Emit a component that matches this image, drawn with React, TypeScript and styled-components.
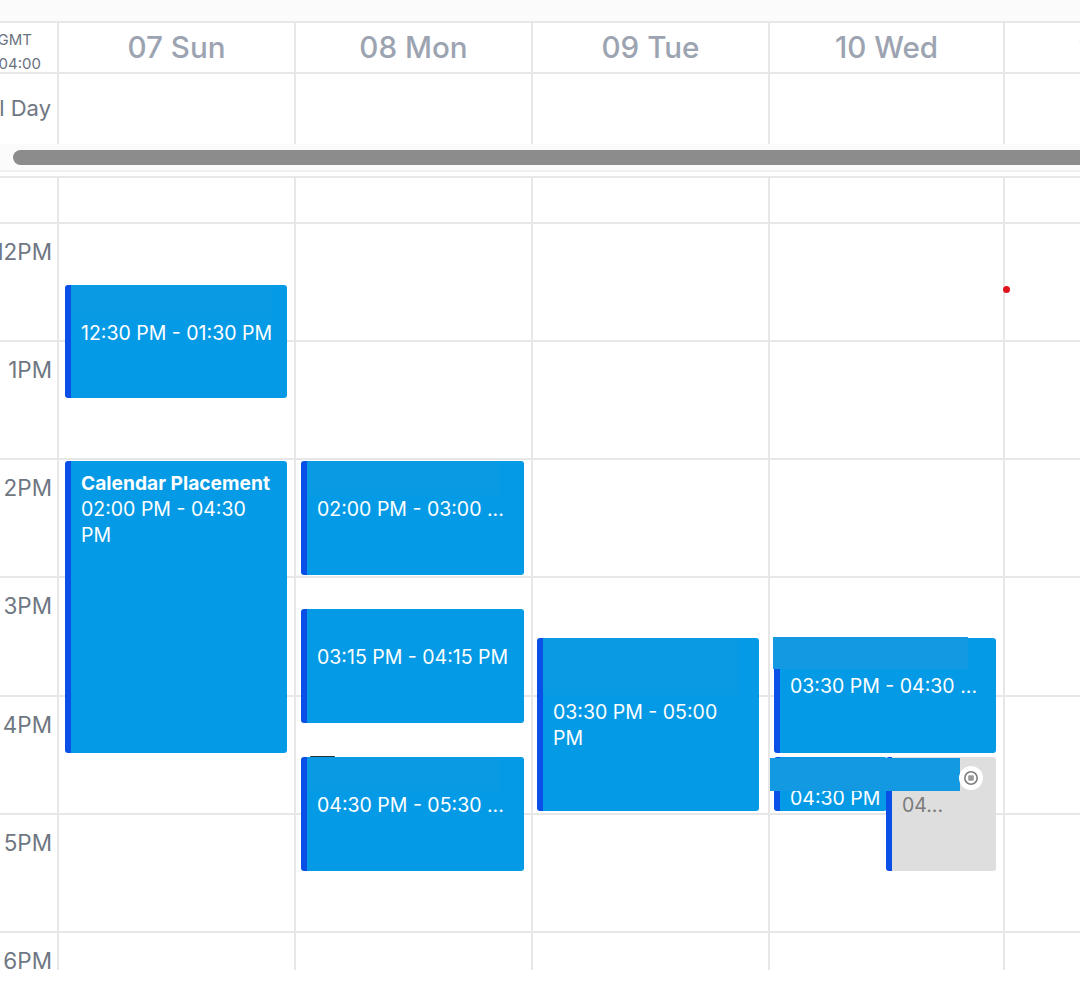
import React from 'react';
import styled, { createGlobalStyle } from 'styled-components';

const LINE = '#e7e7e7';
const EVENT_BLUE = '#049ae5';
const PATCH_BLUE = '#1398e2';
const PATCH_SOFT = '#0a9ae4';
const ACCENT = '#0a4fe8';
const HOUR = 118.17;

const GlobalStyle = createGlobalStyle`
  html, body {
    margin: 0;
    padding: 0;
    background: #fff;
    overflow: hidden;
  }
  body {
    font-family: Inter, "Liberation Sans", sans-serif;
  }
`;

const Page = styled.div`
  width: 1080px;
  height: 987px;
  overflow: hidden;
  background: #fff;
`;

const TopStrip = styled.div`
  height: 21px;
  background: #fbfbfb;
`;

const Columns = styled.div`
  display: grid;
  grid-template-columns: 59px 237px 237px 237px 235px 237px;
  width: 1242px;
`;

const HeaderRow = styled(Columns)`
  border-top: 2px solid ${LINE};
`;

const GutterCell = styled.div<{ $height: number; $bare?: boolean }>`
  height: ${(p) => p.$height}px;
  box-sizing: border-box;
  border-right: 2px solid ${LINE};
  border-bottom: ${(p) => (p.$bare ? 'none' : `2px solid ${LINE}`)};
  display: flex;
  align-items: center;
  justify-content: flex-end;
  overflow: hidden;
`;

const ZoneLabel = styled.div`
  flex: none;
  align-self: flex-start;
  margin-top: 5px;
  padding-right: 16px;
  font-size: 15px;
  line-height: 24px;
  color: #6b7280;
  text-align: center;
  white-space: nowrap;
`;

const AllDayLabel = styled.div`
  flex: none;
  padding-right: 6px;
  font-size: 22px;
  color: #6f7782;
  white-space: nowrap;
  margin-bottom: 2px;
`;

const DayHead = styled.div`
  height: 51px;
  box-sizing: border-box;
  padding-bottom: 2px;
  border-right: 2px solid ${LINE};
  border-bottom: 2px solid ${LINE};
  display: flex;
  align-items: center;
  justify-content: center;
  font-size: 29.6px;
  font-weight: 500;
  color: #9ca3b1;
  white-space: nowrap;
`;

const AllDayCell = styled.div`
  height: 70px;
  box-sizing: border-box;
  border-right: 2px solid ${LINE};
`;

const ScrollTrack = styled.div`
  height: 28px;
  box-sizing: border-box;
  padding: 6px 0 0 13px;
  background: #fbfbfb;
  border-bottom: 2px solid #f0f0f0;
`;

const ScrollThumb = styled.div`
  height: 15px;
  width: 1200px;
  border-radius: 8px;
  background: #8c8c8c;
`;

const Spacer = styled.div`
  height: 4px;
  background: #fff;
  border-bottom: 2px solid ${LINE};
`;

const Body = styled(Columns)`
  height: 792px;
  overflow: hidden;
`;

const Gutter = styled.div`
  border-right: 2px solid ${LINE};
  overflow: hidden;
`;

const FirstSlot = styled.div`
  height: 46px;
  box-sizing: border-box;
  border-bottom: 2px solid ${LINE};
`;

const HourSlot = styled.div`
  height: ${HOUR}px;
  box-sizing: border-box;
  border-bottom: 2px solid ${LINE};
`;

const HourLabel = styled(HourSlot)`
  display: flex;
  justify-content: flex-end;
  align-items: flex-start;
  padding: 14px 5px 0 0;
  font-size: 22.5px;
  line-height: 28px;
  color: #6f7782;
  white-space: nowrap;
`;

const DayColumn = styled.div`
  position: relative;
  border-right: 2px solid ${LINE};
`;

const Event = styled.div<{ $top: number; $left: number; $width: number; $height: number; $muted?: boolean; $padTop?: number }>`
  position: absolute;
  top: ${(p) => p.$top}px;
  left: ${(p) => p.$left}px;
  width: ${(p) => p.$width}px;
  height: ${(p) => p.$height}px;
  box-sizing: border-box;
  padding: ${(p) => p.$padTop ?? 9}px 16px 0 10px;
  border-left: 6px solid ${ACCENT};
  border-radius: 3px;
  background: ${(p) => (p.$muted ? '#dedede' : EVENT_BLUE)};
  color: ${(p) => (p.$muted ? '#7a7a7a' : '#fff')};
  font-size: 19.5px;
  line-height: 26px;
  overflow: hidden;
`;

const EventTitle = styled.div<{ $lines?: number }>`
  min-height: ${(p) => (p.$lines ?? 1) * 26}px;
  font-size: 19.2px;
  font-weight: 700;
  white-space: nowrap;
`;

const EventTime = styled.div<{ $nowrap?: boolean }>`
  white-space: ${(p) => (p.$nowrap ? 'nowrap' : 'normal')};
`;

const Patch = styled.div<{ $top: number; $left: number; $width: number; $height: number; $soft?: boolean }>`
  position: absolute;
  top: ${(p) => p.$top}px;
  left: ${(p) => p.$left}px;
  width: ${(p) => p.$width}px;
  height: ${(p) => p.$height}px;
  background: ${(p) => (p.$soft ? PATCH_SOFT : PATCH_BLUE)};
`;

const Speck = styled.div`
  position: absolute;
  top: 578px;
  left: 14px;
  width: 25px;
  height: 1px;
  border-radius: 2px 2px 0 0;
  background: #25303a;
`;

const StopButton = styled.div`
  position: absolute;
  top: 588px;
  left: 189px;
  width: 24px;
  height: 24px;
  border-radius: 50%;
  background: #fff;
  display: flex;
  align-items: center;
  justify-content: center;
`;

const NowDot = styled.div`
  position: absolute;
  top: 108px;
  left: -2px;
  width: 7px;
  height: 7px;
  border-radius: 50%;
  background: #e0141e;
`;

const days = ['07 Sun', '08 Mon', '09 Tue', '10 Wed', '11 Thu'];
const hours = ['12PM', '1PM', '2PM', '3PM', '4PM', '5PM', '6PM'];

const hourLines = (
  <>
    <FirstSlot />
    {hours.map((h) => (
      <HourSlot key={h} />
    ))}
  </>
);

export default function App() {
  return (
    <Page>
      <GlobalStyle />
      <TopStrip />
      <HeaderRow>
        <GutterCell $height={51}>
          <ZoneLabel>
            GMT
            <br />
            +04:00
          </ZoneLabel>
        </GutterCell>
        {days.map((d) => (
          <DayHead key={d}>{d}</DayHead>
        ))}
        <GutterCell $height={70} $bare>
          <AllDayLabel>All Day</AllDayLabel>
        </GutterCell>
        {days.map((d) => (
          <AllDayCell key={d} />
        ))}
      </HeaderRow>
      <ScrollTrack>
        <ScrollThumb />
      </ScrollTrack>
      <Spacer />
      <Body>
        <Gutter>
          <FirstSlot />
          {hours.map((h) => (
            <HourLabel key={h}>{h}</HourLabel>
          ))}
        </Gutter>

        <DayColumn>
          {hourLines}
          <Event $top={107} $left={6} $width={222} $height={113}>
            <EventTitle />
            <EventTime $nowrap>12:30 PM - 01:30 PM</EventTime>
          </Event>
          <Patch $soft $top={107} $left={12} $width={201} $height={34} />
          <Event $top={283} $left={6} $width={222} $height={292}>
            <EventTitle>Calendar Placement</EventTitle>
            <EventTime>02:00 PM - 04:30 PM</EventTime>
          </Event>
        </DayColumn>

        <DayColumn>
          {hourLines}
          <Event $top={283} $left={5} $width={223} $height={114}>
            <EventTitle />
            <EventTime $nowrap>02:00 PM - 03:00 ...</EventTime>
          </Event>
          <Patch $soft $top={283} $left={11} $width={193} $height={34} />
          <Event $top={431} $left={5} $width={223} $height={114}>
            <EventTitle />
            <EventTime $nowrap>03:15 PM - 04:15 PM</EventTime>
          </Event>
          <Event $top={579} $left={5} $width={223} $height={114}>
            <EventTitle />
            <EventTime $nowrap>04:30 PM - 05:30 ...</EventTime>
          </Event>
          <Patch $soft $top={579} $left={11} $width={193} $height={34} />
          <Speck />
        </DayColumn>

        <DayColumn>
          {hourLines}
          <Event $top={460} $left={4} $width={222} $height={173}>
            <EventTitle $lines={2} />
            <EventTime>03:30 PM - 05:00 PM</EventTime>
          </Event>
          <Patch $soft $top={460} $left={10} $width={195} $height={57} />
        </DayColumn>

        <DayColumn>
          {hourLines}
          <Event $top={460} $left={4} $width={222} $height={115}>
            <EventTitle />
            <EventTime $nowrap>03:30 PM - 04:30 ...</EventTime>
          </Event>
          <Patch $top={459} $left={3} $width={195} $height={32} />
          <Event $top={579} $left={4} $width={113} $height={54} $padTop={2}>
            <EventTitle />
            <EventTime $nowrap>04:30 PM</EventTime>
          </Event>
          <Event $top={579} $left={116} $width={110} $height={114} $muted>
            <EventTitle />
            <EventTime $nowrap>04...</EventTime>
          </Event>
          <Patch $top={580} $left={0} $width={190} $height={33} />
          <StopButton>
            <svg width="16" height="16" viewBox="0 0 16 16" fill="none">
              <circle cx="8" cy="8" r="6.2" stroke="#7d7d7d" strokeWidth="1.6" />
              <rect x="5.2" y="5.2" width="5.6" height="5.6" rx="1" fill="#9a9a9a" />
            </svg>
          </StopButton>
        </DayColumn>

        <DayColumn>
          {hourLines}
          <NowDot />
        </DayColumn>
      </Body>
    </Page>
  );
}
